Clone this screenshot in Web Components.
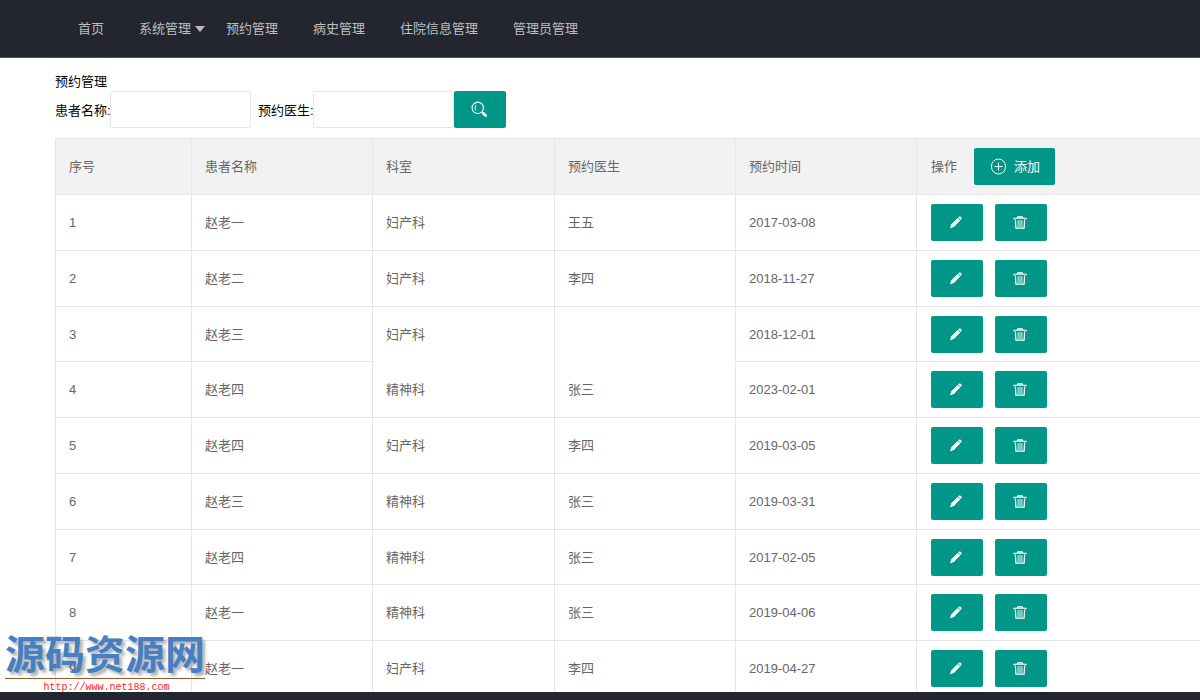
<!DOCTYPE html>
<html lang="zh-CN">
<head>
<meta charset="utf-8">
<title>预约管理</title>
<style>
  html, body { margin: 0; height: 100%; }
  body { font: 13px/20px "Liberation Sans", "Noto Sans CJK SC", sans-serif; color: #000; background: #fff; }
</style>
</head>
<body>
<app-shell>
  <app-nav slot="header"></app-nav>
  <search-bar></search-bar>
  <appointment-table></appointment-table>
  <site-mark slot="mark"></site-mark>
</app-shell>

<script>
const define = (name, html, setup) => {
  const template = document.createElement('template');
  template.innerHTML = html;
  customElements.define(name, class extends HTMLElement {
    constructor() {
      super();
      this.attachShadow({ mode: 'open' }).append(template.content.cloneNode(true));
      if (setup) setup(this.shadowRoot, this);
    }
  });
};

const icons = {
  search: '<svg width="18" height="18" viewBox="0 0 18 18" fill="none" stroke="#fff"><circle cx="6.8" cy="6.8" r="5.7" stroke-width="1.1"/><path d="M5 4C3.8 5.6 3.8 7.8 5 9.4" stroke-width="1"/><path d="M10.8 11l1.4 1.2" stroke-width="1.2"/><path d="M12.4 12.4l2.2 2.2" stroke-width="2.8" stroke-linecap="round"/></svg>',
  add: '<svg width="18" height="18" viewBox="0 0 18 18" fill="none" stroke="#fff"><rect x="2.5" y="1" width="14" height="15" rx="7" stroke-width="1"/><path d="M9.5 4.5v8M5.5 8.5h8" stroke-width="1.1"/></svg>',
  edit: '<svg width="14" height="14" viewBox="0 0 14 14" fill="#fff"><path d="M0 12.2l1.3-3.9 6.3-6.3 2.6 2.6-6.3 6.3z"/><path d="M8 1.6l.9-.9c1.3-1.1 3.6.9 2.4 2.5l-.9.9z"/></svg>',
  remove: '<svg width="14" height="14" viewBox="0 0 14 14" fill="none" stroke="#fff"><path d="M0 3.6V2.2h12V3.6M3.2 1.9l.6-1h4.4l.6 1" stroke-width="1.1"/><path d="M1.4 3.6l.5 8.5h8.2l.5-8.5" stroke-width="1.2"/><path d="M4.1 4.1v7M6 4.1v7M7.9 4.1v7" stroke-width=".9"/></svg>'
};

define('ui-button', `
  <style>
    :host { display: inline-block; vertical-align: middle; }
    button { display: flex; align-items: center; justify-content: center; gap: 7px; box-sizing: border-box;
      min-width: 52px; height: 37px; padding: 0 15px; border: 0; border-radius: 2px;
      background: #009688; color: #fff; font: inherit; cursor: pointer; }
    button:hover { background: #33ab9f; }
    svg { display: block; overflow: visible; }
  </style>
  <button type="button"><span></span><slot></slot></button>`,
  (root, host) => {
    root.querySelector('span').innerHTML = icons[host.getAttribute('icon')] || '';
    root.querySelector('button').setAttribute('aria-label', host.getAttribute('label') || '');
  });

define('app-nav', `
  <style>
    :host { display: block; background: #23262e; border-bottom: 1px solid #4b4e58; }
    nav { display: flex; gap: 35px; padding: 0 78px; height: 57px; align-items: center; white-space: nowrap; }
    a { color: #bdbec0; text-decoration: none; }
    a:hover { color: #fff; }
    .menu { position: relative; }
    .menu::after { content: ""; position: absolute; left: 100%; top: 7px; margin-left: 4px;
      border: 5px solid transparent; border-top: 6px solid #bdbec0; border-bottom: 0; }
  </style>
  <nav>
    <a href="#home">首页</a>
    <a href="#system" class="menu">系统管理</a>
    <a href="#appointments">预约管理</a>
    <a href="#history">病史管理</a>
    <a href="#inpatients">住院信息管理</a>
    <a href="#admins">管理员管理</a>
  </nav>`);

define('search-bar', `
  <style>
    :host { display: block; }
    h1 { margin: 0; padding-top: 15px; font: inherit; line-height: 18px; }
    form { display: flex; align-items: center; }
    label { width: 55px; padding-top: 2px; white-space: nowrap; }
    input { box-sizing: border-box; width: 141px; height: 37px; padding: 0 10px; border: 1px solid #e6e6e6;
      border-radius: 2px; font: inherit; outline: 0; background: #fff; }
    #patient { margin-right: 7px; }
  </style>
  <h1>预约管理</h1>
  <form>
    <label for="patient">患者名称:</label><input id="patient" type="text">
    <label for="doctor">预约医生:</label><input id="doctor" type="text">
    <ui-button icon="search" label="搜索"></ui-button>
  </form>`);

define('appointment-table', `
  <style>
    :host { display: block; margin-top: 10px; color: #666; }
    table { width: 100%; table-layout: fixed; border-collapse: collapse; }
    .no { width: 136px; }
    .data { width: 181px; }
    .dept { width: 182px; }
    th, td { box-sizing: border-box; padding: 9px 13px; text-align: left; font-weight: 400; border: 1px solid #e6e6e6; }
    th:last-child, td:last-child { padding-left: 14px; border-right: 0; }
    tbody tr:nth-child(4n+3) td { padding-bottom: 8px; }
    th { background: #f2f2f2; }
    .open { border-bottom-color: #fff; }
    .actions { display: flex; align-items: center; gap: 12px; }
    th .actions { gap: 17px; }
  </style>
  <table>
    <colgroup><col class="no"><col class="data"><col class="dept"><col class="data"><col class="data"><col></colgroup>
    <thead><tr>
      <th>序号</th><th>患者名称</th><th>科室</th><th>预约医生</th><th>预约时间</th>
      <th><div class="actions">操作<ui-button icon="add" label="添加">添加</ui-button></div></th>
    </tr></thead>
    <tbody></tbody>
  </table>`,
  root => {
    const rows = [
      ['赵老一', '妇产科', '王五', '2017-03-08'],
      ['赵老二', '妇产科', '李四', '2018-11-27'],
      ['赵老三', '妇产科', '', '2018-12-01'],
      ['赵老四', '精神科', '张三', '2023-02-01'],
      ['赵老四', '妇产科', '李四', '2019-03-05'],
      ['赵老三', '精神科', '张三', '2019-03-31'],
      ['赵老四', '精神科', '张三', '2017-02-05'],
      ['赵老一', '精神科', '张三', '2019-04-06'],
      ['赵老一', '妇产科', '李四', '2019-04-27']
    ];
    root.querySelector('tbody').innerHTML = rows.map((row, i) => {
      const open = row[2] ? '' : ' class="open"';
      return `<tr><td>${i + 1}</td><td>${row[0]}</td><td${open}>${row[1]}</td><td${open}>${row[2]}</td><td>${row[3]}</td>
        <td><div class="actions"><ui-button icon="edit" label="编辑"></ui-button><ui-button icon="remove" label="删除"></ui-button></div></td></tr>`;
    }).join('');
    root.querySelectorAll('tr:nth-child(4) td:nth-child(3), tr:nth-child(4) td:nth-child(4)')
      .forEach(cell => { cell.style.borderTopColor = '#fff'; });
  });

define('site-mark', `
  <style>
    :host { display: block; width: 200px; text-align: center; white-space: nowrap; }
    strong { display: block; padding-bottom: 6px; font: 700 40px/40px "Noto Sans CJK SC", sans-serif; color: #4680c2;
      text-shadow: 3px 3px 3px rgba(0, 0, 0, .3); border-bottom: 1px solid #8c5a2b; }
    a { display: block; padding-left: 3px; font: 10px/18px "Liberation Mono", monospace; color: #f22; text-decoration: none; }
  </style>
  <strong>源码资源网</strong>
  <a href="http://www.net188.com">http://www.net188.com</a>`);

define('app-shell', `
  <style>
    :host { display: flex; flex-direction: column; height: 100vh; position: relative; overflow: hidden; }
    main { flex: 1; min-height: 0; overflow: auto; scrollbar-width: none; padding-left: 55px; }
    footer { height: 8px; background: #23262e; }
    .mark { position: absolute; left: 5px; bottom: 3px; }
  </style>
  <slot name="header"></slot>
  <main><slot></slot></main>
  <footer></footer>
  <div class="mark"><slot name="mark"></slot></div>`);
</script>
</body>
</html>
